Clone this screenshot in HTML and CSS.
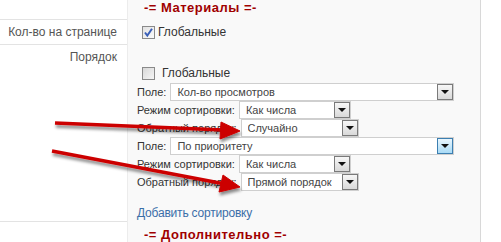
FILE: index.html
```html
<!DOCTYPE html>
<html lang="ru">
<head>
    <meta charset="UTF-8">
    <title>Настройки</title>
    <link rel="stylesheet" href="styles.css">
</head>
<body>
    <div class="page">
        <!-- Левая колонка с подписями -->
        <div class="sidebar">
            <div class="side-row head"></div>
            <div class="side-row count">Кол-во на странице</div>
            <div class="side-row order">Порядок</div>
        </div>

        <!-- Основной блок -->
        <div class="content">
            <div class="section-title">-= Материалы =-</div>

            <div class="check-row first">
                <span class="checkbox checked">
                    <svg width="11" height="11" viewBox="0 0 11 11"><path d="M2 5.5 L4.3 8.5 L9 1.8" fill="none" stroke="#3a5fb8" stroke-width="2"/></svg>
                </span>
                <span>Глобальные</span>
            </div>

            <div class="check-row second">
                <span class="checkbox"></span>
                <span>Глобальные</span>
            </div>

            <div class="sort-list">
                <div class="field-row">
                    <span class="label">Поле:</span>
                    <div class="select wide"><span class="value">Кол-во просмотров</span><span class="btn"></span></div>
                </div>
                <div class="field-row">
                    <span class="label">Режим сортировки:</span>
                    <div class="select mode"><span class="value">Как числа</span><span class="btn"></span></div>
                </div>
                <div class="field-row">
                    <span class="label">Обратный порядок:</span>
                    <div class="select dir"><span class="value">Случайно</span><span class="btn"></span></div>
                </div>
                <div class="field-row">
                    <span class="label">Поле:</span>
                    <div class="select wide"><span class="value">По приоритету</span><span class="btn active"></span></div>
                </div>
                <div class="field-row">
                    <span class="label">Режим сортировки:</span>
                    <div class="select mode"><span class="value">Как числа</span><span class="btn"></span></div>
                </div>
                <div class="field-row">
                    <span class="label">Обратный порядок:</span>
                    <div class="select dir"><span class="value">Прямой порядок</span><span class="btn"></span></div>
                </div>
            </div>

            <a class="add-link" href="#">Добавить сортировку</a>

            <div class="section-title">-= Дополнительно =-</div>
        </div>
        <div class="rest"></div>

        <!-- Стрелки поверх скриншота -->
        <svg class="arrows" width="501" height="242" viewBox="0 0 501 242">
            <defs>
                <filter id="shadow" x="-10%" y="-50%" width="120%" height="200%">
                    <feDropShadow dx="1" dy="3" stdDeviation="1.5" flood-color="#000" flood-opacity="0.45"/>
                </filter>
            </defs>
            <g filter="url(#shadow)" fill="#cc0000" stroke="#cc0000">
                <path d="M55 123 L224 130" stroke-width="3.5" fill="none"/>
                <path d="M240 131 L221 122 L220 139 Z" stroke-width="1"/>
                <path d="M52 151 L225 184" stroke-width="3.5" fill="none"/>
                <path d="M240 187 L223 175 L219 192 Z" stroke-width="1"/>
            </g>
        </svg>
    </div>
</body>
</html>
```

FILE: styles.css
```css
body {
    margin: 0;
    font-family: "Liberation Sans", Arial, sans-serif;
    font-size: 12px;
    color: #333;
    background: #fff;
}
.page {
    position: relative;
    display: flex;
    height: 242px;
    overflow: hidden;
}
.sidebar {
    width: 127px;
    flex-shrink: 0;
    color: #555;
}
.side-row {
    border-bottom: 1px solid #e3e3e3;
    text-align: right;
    padding-right: 10px;
    box-sizing: border-box;
}
.side-row.head {
    height: 20px;
}
.side-row.count {
    height: 25px;
    padding-top: 5px;
}
.side-row.order {
    height: 177px;
    padding-top: 5px;
}
.content {
    width: 354px;
    flex-shrink: 0;
    background: #f9f9f9;
    border-left: 1px solid #ececec;
    border-right: 1px solid #d8d8d8;
    padding-left: 9px;
    box-sizing: border-box;
}
.rest {
    flex-grow: 1;
}
.section-title {
    font-weight: bold;
    font-size: 13px;
    letter-spacing: 0.5px;
    color: #a00000;
    padding-left: 7px;
    line-height: 16px;
}
.check-row {
    display: flex;
    align-items: center;
    height: 14px;
    margin-left: 5px;
}
.check-row.first {
    margin-top: 9px;
    gap: 3px;
}
.check-row.second {
    margin-top: 27px;
    gap: 7px;
}
.checkbox {
    width: 13px;
    height: 13px;
    box-sizing: border-box;
    border: 1px solid #8a8a8a;
    background: linear-gradient(135deg, #d8d8d8, #f6f6f6);
    display: flex;
    align-items: center;
    justify-content: center;
}
.checkbox.checked {
    background: linear-gradient(135deg, #e2e2e2, #fbfbfb);
}
.sort-list {
    margin-top: 3px;
    display: flex;
    flex-direction: column;
    font-size: 11px;
}
.field-row {
    display: flex;
    align-items: center;
    height: 18px;
}
.label {
    margin-right: 4px;
}
.select {
    display: flex;
    align-items: center;
    height: 18px;
    box-sizing: border-box;
    border: 1px solid #cfcfcf;
    background: #fff;
    padding-left: 6px;
    color: #444;
}
.select.wide {
    width: 284px;
}
.select.mode {
    width: 112px;
}
.select.dir {
    width: 118px;
}
.select .value {
    flex-grow: 1;
    white-space: nowrap;
    overflow: hidden;
}
.btn {
    position: relative;
    width: 16px;
    height: 16px;
    box-sizing: border-box;
    border: 1px solid #7a7a7a;
    background: linear-gradient(#f7f7f7, #d9d9d9);
    flex-shrink: 0;
}
.btn::after {
    content: "";
    position: absolute;
    left: 3px;
    top: 5px;
    border-left: 4px solid transparent;
    border-right: 4px solid transparent;
    border-top: 4px solid #111;
}
.btn.active {
    border-color: #3c7fb1;
    background: linear-gradient(#eaf6fd, #a9dbf6);
}
.add-link {
    display: block;
    margin-top: 15px;
    color: #3b6ea8;
    text-decoration: none;
    letter-spacing: -0.2px;
}
.add-link + .section-title {
    margin-top: 7px;
}
.arrows {
    position: absolute;
    left: 0;
    top: 0;
    pointer-events: none;
}
```
